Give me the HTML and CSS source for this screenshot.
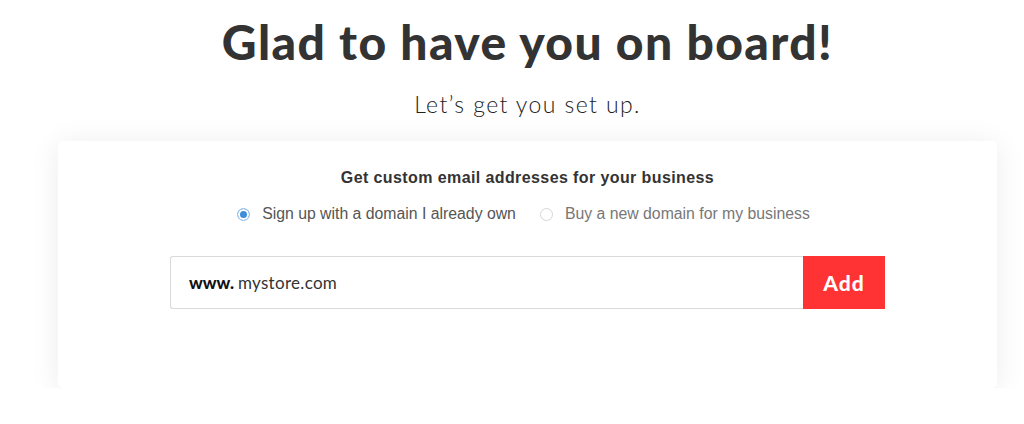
FILE: index.html
```html
<!DOCTYPE html>
<html lang="en">
<head>
    <meta charset="UTF-8">
    <meta name="viewport" content="width=device-width, initial-scale=1.0">
    <title>Welcome</title>
    <link rel="stylesheet" href="styles.css">
</head>
<body>
    <div class="page">
        <h1>Glad to have you on board!</h1>
        <p class="subtitle">Let’s get you set up.</p>
        <div class="card">
            <h2>Get custom email addresses for your business</h2>
            <div class="options">
                <label class="option">
                    <input type="radio" name="domain" value="own" checked>
                    <span class="dot"></span>
                    <span class="option-text">Sign up with a domain I already own</span>
                </label>
                <label class="option">
                    <input type="radio" name="domain" value="new">
                    <span class="dot"></span>
                    <span class="option-text">Buy a new domain for my business</span>
                </label>
            </div>
            <form class="domain-form">
                <div class="domain-input">
                    <span class="prefix">www.</span>
                    <input type="text" name="domain" placeholder="mystore.com">
                </div>
                <button type="submit">Add</button>
            </form>
        </div>
    </div>
</body>
</html>
```

FILE: styles.css
```css
body {
    font-family: Lato, "Liberation Sans", sans-serif;
    background-color: #fff;
    margin: 0;
    padding: 0;
    color: #333;
}

.page {
    width: 939px;
    margin-left: 58px;
    text-align: center;
}

h1 {
    margin: 0;
    padding-top: 14px;
    font-size: 48px;
    font-weight: 900;
    line-height: 56px;
    letter-spacing: 1.4px;
    color: #333;
}

.subtitle {
    margin: 20px 0 0;
    font-size: 23px;
    font-weight: 300;
    line-height: 28px;
    letter-spacing: 1.4px;
    color: #222;
}

.card {
    margin-top: 23px;
    background-color: white;
    border-radius: 5px;
    box-shadow: 0 3px 30px rgba(0, 0, 0, 0.08);
    padding: 28px 112px 79px;
}

h2 {
    margin: 0;
    font-family: "Liberation Sans", Arial, sans-serif;
    font-size: 16px;
    font-weight: 700;
    line-height: 18px;
    letter-spacing: 0.4px;
    color: #333;
}

.options {
    margin-top: 17px;
    padding-right: 8px;
    display: flex;
    justify-content: center;
    gap: 24px;
    font-family: "Liberation Sans", Arial, sans-serif;
    font-size: 15.8px;
    line-height: 20px;
    color: #555;
}

.option {
    display: flex;
    align-items: center;
    gap: 12px;
    cursor: pointer;
}

.option input {
    display: none;
}

.dot {
    width: 11px;
    height: 11px;
    border: 1px solid #d6d6d6;
    border-radius: 50%;
    background: #fff;
    box-sizing: content-box;
}

.option input:checked + .dot {
    border-color: #9cc4ea;
    background: #3d8ddb;
    box-shadow: inset 0 0 0 2px #fff;
}

.option input:not(:checked) ~ .option-text {
    color: #777;
}

.domain-form {
    margin-top: 32px;
    display: flex;
    height: 53px;
}

.domain-input {
    flex: 1;
    display: flex;
    align-items: center;
    border: 1px solid #d9d9d9;
    border-right: none;
    border-radius: 3px 0 0 3px;
    padding-left: 18px;
}

.prefix {
    font-size: 17px;
    font-weight: 900;
    color: #111;
    margin-right: 4px;
}

.domain-input input {
    flex: 1;
    border: none;
    outline: none;
    padding: 0;
    font-family: Lato, "Liberation Sans", sans-serif;
    font-size: 17px;
    letter-spacing: 0.3px;
    color: #333;
}

.domain-input input::placeholder {
    color: #333;
}

button {
    width: 82px;
    background-color: #ff3333;
    color: white;
    border: none;
    font-family: Lato, "Liberation Sans", sans-serif;
    font-size: 21px;
    font-weight: 900;
    letter-spacing: 1px;
    cursor: pointer;
}
```
